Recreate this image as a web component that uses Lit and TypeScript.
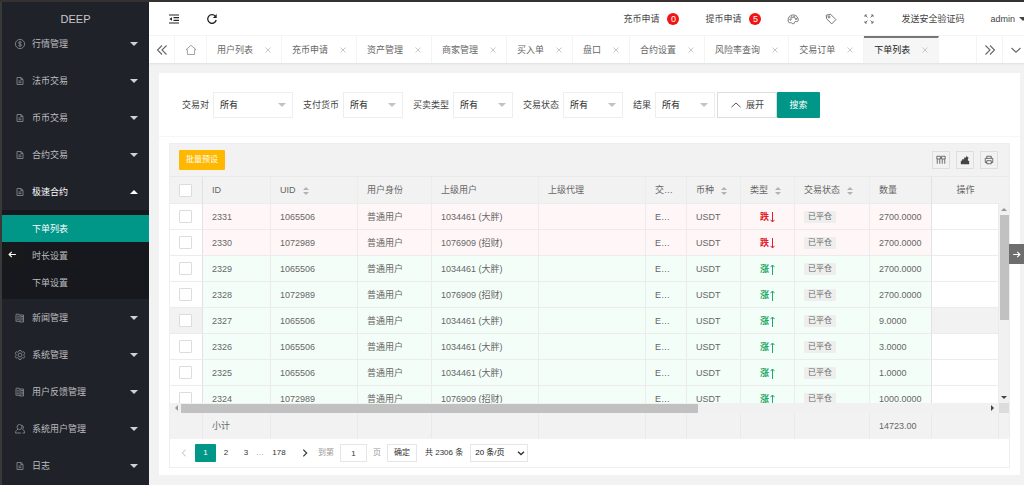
import { LitElement, html, css, svg, nothing } from "lit";
import { customElement, state } from "lit/decorators.js";
import { classMap } from "lit/directives/class-map.js";

type Row = { id: string; uid: string; parent: string; up: boolean; amount: string };

const ROWS: Row[] = [
  { id: "2331", uid: "1065506", parent: "1034461 (大胖)", up: false, amount: "2700.0000" },
  { id: "2330", uid: "1072989", parent: "1076909 (招财)", up: false, amount: "2700.0000" },
  { id: "2329", uid: "1065506", parent: "1034461 (大胖)", up: true, amount: "2700.0000" },
  { id: "2328", uid: "1072989", parent: "1076909 (招财)", up: true, amount: "2700.0000" },
  { id: "2327", uid: "1065506", parent: "1034461 (大胖)", up: true, amount: "9.0000" },
  { id: "2326", uid: "1065506", parent: "1034461 (大胖)", up: true, amount: "3.0000" },
  { id: "2325", uid: "1065506", parent: "1034461 (大胖)", up: true, amount: "1.0000" },
  { id: "2324", uid: "1072989", parent: "1076909 (招财)", up: true, amount: "1000.0000" },
];

const MENU = [
  { label: "行情管理", icon: "dollar" },
  { label: "法币交易", icon: "file" },
  { label: "币币交易", icon: "file" },
  { label: "合约交易", icon: "file" },
  { label: "极速合约", icon: "file", children: ["下单列表", "时长设置", "下单设置"] },
  { label: "新闻管理", icon: "book" },
  { label: "系统管理", icon: "gear" },
  { label: "用户反馈管理", icon: "book" },
  { label: "系统用户管理", icon: "user" },
  { label: "日志", icon: "file" },
];

const TABS = ["用户列表", "充币申请", "资产管理", "商家管理", "买入单", "盘口", "合约设置", "风险率查询", "交易订单", "下单列表"];

const FILTERS = [
  { label: "交易对", wide: true },
  { label: "支付货币" },
  { label: "买卖类型" },
  { label: "交易状态" },
  { label: "结果" },
];

const ICONS: Record<string, unknown> = {
  dollar: svg`<circle cx="6" cy="6" r="4.6"/><path d="M7.6 4.4C7 3.7 4.5 3.6 4.5 4.9 4.5 6.3 7.6 5.6 7.6 7.1 7.6 8.4 5 8.3 4.3 7.5M6 2.8v6.4"/>`,
  file: svg`<path d="M3 2.500h4l2 1.800v5.200H3zM6.900 2.600v1.900h2M4.400 6h3M4.400 7.700h3"/>`,
  book: svg`<path d="M6 3v7M6 3C5 2 3 2 2 2.4v7C3 9 5 9 6 10M6 3h3.5v7H6M7 4.5h2M7 6.2h2M7 7.9h2M3.2 4.3h1.6M3.2 6h1.6M3.2 7.6h1.6"/>`,
  gear: svg`<circle cx="6" cy="6" r="1.9"/><path d="M5 1.5h2l.4 1.2 1.1.5 1.2-.5 1 1.5-.7 1v1.4l.7 1-1 1.5-1.2-.4-1.1.5L7 10.5H5l-.4-1.3-1.1-.5-1.2.4-1-1.5.7-1V5.200l-.7-1 1-1.500 1.200.500 1.100-.500z"/>`,
  user: svg`<circle cx="5.500" cy="4" r="2.500"/><path d="M4 6.200C2.400 7 1.500 8.200 1.500 10h5.500M8 2.400c1.600.600 2 2.600.600 4C10 7 10.600 8.500 10.600 10H8.500"/>`,
  shrink: svg`<path d="M1 2h10M5.500 4.700H11M5.500 7.300H11M1 10h10" stroke-width="1.200"/><path d="M4 4.300v3.400L1.400 6z" fill="currentColor" stroke="none"/>`,
  refresh: svg`<path d="M10.200 7A4.300 4.300 0 1 1 9.300 3.200" stroke-width="1.300"/><path d="M10.700 1v4H6.900z" fill="currentColor" stroke="none"/>`,
  home: svg`<path d="M1 5.700 6 1.300l5 4.400H9.600V10.500H2.400V5.700z"/>`,
  dleft: svg`<path d="M6 1.500 1.500 6 6 10.500M10.500 1.500 6 6l4.500 4.500" stroke-width="1.100"/>`,
  dright: svg`<path d="M6 1.500 10.500 6 6 10.500M1.500 1.500 6 6l-4.500 4.500" stroke-width="1.100"/>`,
  down: svg`<path d="M1.500 4 6 8.200 10.500 4" stroke-width="1.100"/>`,
  up: svg`<path d="M1.500 8.200 6 4l4.500 4.200"/>`,
  left: svg`<path d="M8 2 4 6l4 4" stroke-width="1.200"/>`,
  right: svg`<path d="M4 2l4 4-4 4" stroke-width="1.400"/>`,
  close: svg`<path d="M3.500 3.500l5 5M8.500 3.500l-5 5"/>`,
  palette: svg`<path d="M2.500 10C.800 8.800.600 5.600 2.300 3.700 4.300 1.400 8 1.400 10 3.600c1.500 1.700 1.400 3.900.900 4.600-.800 1-2.200 0-3 .500-1 .700 0 1.800-1.200 2-.700.100-1.400-.100-1.700-.400-1-1-1.300-.700-2.500-.300z"/><circle cx="3.500" cy="6.600" r=".7"/><circle cx="4.700" cy="4.400" r=".7"/><circle cx="7.200" cy="4" r=".7"/><circle cx="9" cy="5.900" r=".7"/>`,
  tag: svg`<path d="M1.300 2.200 5.600 1.300 10.900 6.600 6.800 10.900 1.500 5.700z"/><circle cx="4" cy="3.900" r="1"/>`,
  full: svg`<path d="M2 4V2h2M2 2l2.500 2.500M8 2h2v2M10 2 7.500 4.500M2 8v2h2M2 10l2.500-2.500M10 8v2H8M10 10 7.500 7.500"/>`,
  cols: svg`<path d="M1 1.500h4.300v3.300H1zM6.700 1.500H11v3.300H6.700zM1.500 5v5.500M4.500 5v5.500M7.500 5v5.500M10.500 5v5.500"/>`,
  exportIcon: svg`<path d="M1 7h10v4H1zM2.500 5h7v2h-7zM5 3h2.500V1l3 2.600-2 2H5z" fill="currentColor" stroke="none"/>`,
  print: svg`<path d="M3.300 4V1.500h5.400V4M3.300 9H1.500V4h9v5H8.700M3.300 6.800h5.400v3.700H3.300z"/>`,
  arrowL: svg`<path d="M10.500 6h-9M5 2.500 1.500 6 5 9.500" stroke-width="1.500"/>`,
  arrowR: svg`<path d="M1.500 6h9M7 2.500 10.500 6 7 9.500" stroke-width="1.500"/>`,
};

const icon = (name: string) =>
  html`<svg class="icon" viewBox="0 0 12 12" aria-hidden="true">${ICONS[name]}</svg>`;

const shared = css`
  * { box-sizing: border-box; }
  button, input, select { font: inherit; color: inherit; margin: 0; border-radius: 0; }
  button { padding: 0; border: 0; background: none; cursor: pointer; white-space: nowrap; }
  a { color: inherit; text-decoration: none; }
  ul { list-style: none; margin: 0; padding: 0; }
  .icon { display: block; flex: none; width: 12px; height: 12px; fill: none; stroke: currentColor; stroke-width: 0.9; }
`;

@customElement("side-menu")
class SideMenu extends LitElement {
  static styles = [shared, css`
    :host { display: flex; flex-direction: column; width: 149px; flex: none; background: #20222a; border-left: 2px solid #393939; color: #bcbdbf; overflow: hidden; }
    .brand { height: 34px; flex: none; display: flex; align-items: center; justify-content: center; font-size: 11px; color: #c8c9cb; }
    .scroll { flex: 1; min-height: 0; overflow: hidden; display: flex; flex-direction: column; }
    .list { margin-top: -11px; }
    .item { width: 100%; height: 37px; display: flex; align-items: center; padding: 0 11px 0 12px; gap: 6px; text-align: left; }
    .item .icon { color: #85868a; }
    .name { flex: 1; }
    .caret { border: 4px solid transparent; border-bottom-width: 0; border-top-color: #d2d2d4; }
    .open { color: #fff; }
    .open .caret { border-bottom-width: 4px; border-top-width: 0; border-bottom-color: #fff; }
    .sub { background: #16181d; padding: 5px 0 3px; }
    .leaf { display: flex; align-items: center; height: 27px; padding-left: 30px; }
    .active { background: #009688; color: #fff; }
  `];
  render() {
    return html`
      <div class="brand">DEEP</div>
      <nav class="scroll"><ul class="list">
        ${MENU.map((m) => html`<li>
          <button class=${classMap({ item: true, open: !!m.children })} aria-expanded=${m.children ? "true" : "false"}>
            ${icon(m.icon)}<span class="name">${m.label}</span><span class="caret"></span>
          </button>
          ${m.children
            ? html`<ul class="sub">${m.children.map((c, i) => html`<li><a href="#" class=${classMap({ leaf: true, active: i === 0 })}>${c}</a></li>`)}</ul>`
            : nothing}
        </li>`)}
      </ul></nav>`;
  }
}

@customElement("top-bar")
class TopBar extends LitElement {
  static styles = [shared, css`
    :host { display: block; background: #fff; box-shadow: 0 1px 2px rgba(0, 0, 0, 0.08); }
    .bar { height: 34px; display: flex; align-items: center; justify-content: space-between; color: #444; border-bottom: 1px solid #f4f4f4; overflow: hidden; }
    .group { display: flex; align-items: center; flex: none; gap: 26px; }
    .tools { padding-left: 19px; color: #222; }
    .msg { display: flex; align-items: center; gap: 8px; }
    .badge { width: 12px; height: 12px; border-radius: 6px; background: #f01414; color: #fff; text-align: center; line-height: 12px; }
    .icon-button { color: #666; }
    .user { display: flex; align-items: center; gap: 4px; }
    .caret { border: 4px solid transparent; border-bottom-width: 0; border-top-color: #444; margin-right: -3px; }
    .tabs { height: 27px; display: flex; color: #666; margin-right: -4px; }
    .step { width: 26px; flex: none; display: flex; align-items: center; justify-content: center; border-right: 1px solid #f4f4f4; color: #666; }
    .home { width: 32px; color: #999; }
    .strip { flex: 1; min-width: 0; display: flex; overflow: hidden; }
    .tab { flex: none; display: flex; align-items: center; gap: 9px; padding: 0 7px 0 10px; border-right: 1px solid #f4f4f4; }
    .close { color: #c2c2c2; }
    .on { background: #f6f6f6; color: #222; border-top: 2px solid #777; padding-bottom: 2px; }
    .end { border-right: 0; border-left: 1px solid #f4f4f4; }
  `];
  render() {
    return html`
      <header class="bar">
        <div class="group tools">
          <button aria-label="shrink">${icon("shrink")}</button>
          <button aria-label="refresh">${icon("refresh")}</button>
        </div>
        <div class="group">
          <a class="msg" href="#">充币申请<span class="badge">0</span></a>
          <a class="msg" href="#">提币申请<span class="badge">5</span></a>
          <button class="icon-button" aria-label="theme">${icon("palette")}</button>
          <button class="icon-button" aria-label="note">${icon("tag")}</button>
          <button class="icon-button" aria-label="fullscreen">${icon("full")}</button>
          <a href="#">发送安全验证码</a>
          <button class="user">admin<span class="caret"></span></button>
        </div>
      </header>
      <div class="tabs">
        <button class="step" aria-label="previous">${icon("dleft")}</button>
        <button class="step home" aria-label="home">${icon("home")}</button>
        <div class="strip">
          ${TABS.map((t, i) => html`<a href="#" class=${classMap({ tab: true, on: i === TABS.length - 1 })}>${t}<span class="close">${icon("close")}</span></a>`)}
        </div>
        <button class="step end" aria-label="next">${icon("dright")}</button>
        <button class="step end" aria-label="more">${icon("down")}</button>
      </div>`;
  }
}

@customElement("filter-form")
class FilterForm extends LitElement {
  static styles = [shared, css`
    :host { display: block; padding: 19px 23px 18px; border-bottom: 1px solid #f6f6f6; }
    .form { display: flex; flex-wrap: wrap; align-items: center; row-gap: 8px; color: #444; }
    .field { display: flex; align-items: center; gap: 4px; margin-right: 10px; }
    .field:last-of-type { margin-right: 2px; }
    .pick { position: relative; width: 60px; }
    .wide { width: 80px; }
    .select { appearance: none; display: block; width: 100%; height: 26px; border: 1px solid #eee; background: #fff; padding: 0 6px; color: #222; }
    .mark { position: absolute; right: 7px; top: 11px; border: 4px solid transparent; border-bottom-width: 0; border-top-color: #c2c2c2; pointer-events: none; }
    .button { height: 26px; display: flex; align-items: center; justify-content: center; gap: 4px; }
    .toggle { width: 60px; border: 1px solid #ddd; background: #fff; }
    .search { width: 43px; background: #009688; color: #fff; border-radius: 1px; }
  `];
  render() {
    return html`<form class="form" @submit=${(e: Event) => e.preventDefault()}>
      ${FILTERS.map((f, i) => html`<div class="field">
        <label for="f${i}">${f.label}</label>
        <div class=${classMap({ pick: true, wide: !!f.wide })}><select class="select" id="f${i}"><option>所有</option></select><span class="mark"></span></div>
      </div>`)}
      <button class="button toggle" type="button">${icon("up")}展开</button>
      <button class="button search">搜索</button>
    </form>`;
  }
}

@customElement("order-table")
class OrderTable extends LitElement {
  @state() private hovered = "2327";
  static styles = [shared, css`
    :host { display: block; border: 1px solid #eee; color: #666; }
    .toolbar { height: 33px; padding: 0 11px 0 9px; background: #f2f2f2; border-bottom: 1px solid #e9e9e9; display: flex; align-items: center; justify-content: space-between; }
    .preset { width: 46px; height: 20px; background: #ffb800; color: #fff; border-radius: 1px; font-size: 8px; }
    .actions { display: flex; gap: 6px; }
    .action { width: 18px; height: 18px; border: 1px solid #ddd; display: flex; align-items: center; justify-content: center; color: #444; }
    .action .icon { width: 10px; height: 10px; }
    table { flex: 1; min-width: 0; width: 100%; table-layout: fixed; border-collapse: separate; border-spacing: 0; }
    .band { display: flex; background: #f2f2f2; }
    .gutter { width: 10px; flex: none; }
    .c-check { width: 33px; } .c-id { width: 68px; } .c-uid { width: 87px; } .c-role { width: 74px; }
    .c-parent { width: 107px; } .c-pair { width: 41px; } .c-coin { width: 54px; } .c-type { width: 54px; }
    .c-state { width: 75px; } .c-amount { width: 62px; } .c-op { width: 67px; }
    th, td { height: 26px; padding: 0 0 0 9px; border-right: 1px solid #ececec; border-bottom: 1px solid #ececec; font-weight: normal; text-align: left; white-space: nowrap; overflow: hidden; text-overflow: ellipsis; line-height: 16px; }
    th { height: 27px; }
    .center { text-align: center; padding: 0; }
    th.center:last-child { border-right: 0; }
    .fix-left, .before-op { border-right-color: #e2e2e2; }
    .sort { display: inline-flex; flex-direction: column; gap: 2px; margin-left: 7px; vertical-align: middle; }
    .asc, .desc { border: 3px solid transparent; }
    .asc { border-top: 0; border-bottom-color: #b2b2b2; }
    .desc { border-bottom: 0; border-top-color: #b2b2b2; }
    .box { appearance: none; display: block; width: 13px; height: 13px; border: 1px solid #dcdcdc; background: #fff; border-radius: 1px; }
    .viewport { display: flex; height: 199px; }
    .clip { flex: 1; min-width: 0; height: 100%; overflow: hidden; }
    .down td { background: #fff7f7; }
    .up td { background: #f4fef8; }
    .down .fixed, .up .fixed { background: #fff; }
    .hover .fixed { background: #f2f2f2; }
    .kind { display: inline-flex; align-items: center; gap: 1px; font-weight: bold; padding-top: 2px; line-height: 14px; color: #e0202c; }
    .up .kind { color: #1fa868; }
    .arrow { width: 5px; height: 11px; fill: none; stroke: currentColor; }
    .flip { transform: rotate(180deg); }
    .tag { display: inline-block; vertical-align: middle; height: 12px; line-height: 12px; padding: 0 4px; background: #eee; font-size: 8px; border-radius: 1px; }
    .vbar { width: 10px; flex: none; background: #f1f1f1; display: flex; flex-direction: column; align-items: center; padding: 4px 0; gap: 4px; }
    .vthumb { width: 9px; height: 105px; background: #c1c1c1; }
    .tri { border: 3px solid transparent; flex: none; }
    .t-up { border-top: 0; border-bottom-color: #999; }
    .t-down { border-bottom: 0; border-top-color: #444; margin-top: auto; }
    .t-left { border-left: 0; border-right-color: #999; }
    .t-right { border-right: 0; border-left-color: #444; margin-left: auto; margin-right: 2px; }
    .hbar { display: flex; align-items: center; height: 10px; background: #f1f1f1; padding-left: 5px; gap: 3px; }
    .hthumb { width: 62%; height: 9px; background: #c1c1c1; }
    .corner { width: 10px; height: 10px; background: #dcdcdc; }
    .total td { border-bottom-color: #f2f2f2; border-right-color: #e9e9e9; }
    .pager { display: flex; align-items: center; height: 28px; padding: 0 8px; font-size: 8px; color: #333; }
    .turn { width: 11px; display: flex; justify-content: center; color: #bbb; }
    .turn .icon { width: 10px; height: 10px; }
    .next { color: #333; width: 12px; margin: 0 7px 0 5px; }
    .page { min-width: 20px; height: 18px; display: flex; align-items: center; justify-content: center; }
    .current { width: 21px; margin-left: 6px; background: #009688; color: #fff; border-radius: 1px; }
    .dots { width: 8px; color: #888; }
    .last { min-width: 30px; }
    .jump { display: flex; align-items: center; gap: 6px; color: #999; }
    .number { width: 27px; height: 18px; border: 1px solid #e6e6e6; text-align: center; padding: 0; color: #333; }
    .go { width: 30px; height: 18px; border: 1px solid #e6e6e6; margin: 0 8px 0 6px; background: #fff; }
    .size { position: relative; margin-left: 7px; width: 58px; }
    .limit { appearance: none; display: block; width: 100%; height: 18px; border: 1px solid #e6e6e6; background: #fff; padding: 0 4px; color: #111; }
    .chevron { position: absolute; right: 3px; top: 5px; pointer-events: none; }
    .chevron .icon { width: 8px; height: 8px; }
    .chevron path { stroke-width: 2; }
  `];

  private cols() {
    return html`<colgroup><col class="c-check"><col class="c-id"><col class="c-uid"><col class="c-role"><col class="c-parent"><col><col class="c-pair"><col class="c-coin"><col class="c-type"><col class="c-state"><col class="c-amount"><col class="c-op"></colgroup>`;
  }
  private sort() {
    return html`<span class="sort"><span class="asc"></span><span class="desc"></span></span>`;
  }
  private row(r: Row) {
    return html`<tr class=${classMap({ up: r.up, down: !r.up, hover: this.hovered === r.id })} @mouseenter=${() => (this.hovered = r.id)}>
      <td class="fixed fix-left"><input class="box" type="checkbox" aria-label=${r.id}></td>
      <td>${r.id}</td><td>${r.uid}</td><td>普通用户</td><td>${r.parent}</td><td></td>
      <td>E…</td><td>USDT</td>
      <td class="center"><span class="kind">${r.up ? "涨" : "跌"}<svg class=${classMap({ arrow: true, flip: r.up })} viewBox="0 0 5 11"><path d="M2.500 0v10M.500 7.800l2 2.200 2-2.200"/></svg></span></td>
      <td><span class="tag">已平仓</span></td><td class="before-op">${r.amount}</td><td class="fixed"></td>
    </tr>`;
  }
  render() {
    return html`
      <div class="toolbar">
        <button class="preset">批量预设</button>
        <div class="actions">
          <button class="action" aria-label="columns">${icon("cols")}</button>
          <button class="action" aria-label="export">${icon("exportIcon")}</button>
          <button class="action" aria-label="print">${icon("print")}</button>
        </div>
      </div>
      <div class="band">
        <table>${this.cols()}<thead><tr>
          <th class="fix-left"><input class="box" type="checkbox" aria-label="all"></th>
          <th>ID</th><th>UID${this.sort()}</th><th>用户身份</th><th>上级用户</th><th>上级代理</th><th>交…</th>
          <th>币种${this.sort()}</th><th>类型${this.sort()}</th><th>交易状态${this.sort()}</th><th class="before-op">数量</th><th class="center">操作</th>
        </tr></thead></table>
        <div class="gutter"></div>
      </div>
      <div class="viewport">
        <div class="clip"><table>${this.cols()}<tbody>${ROWS.map((r) => this.row(r))}</tbody></table></div>
        <div class="vbar"><span class="tri t-up"></span><span class="vthumb"></span><span class="tri t-down"></span></div>
      </div>
      <div class="hbar"><span class="tri t-left"></span><span class="hthumb"></span><span class="tri t-right"></span><span class="corner"></span></div>
      <div class="band">
        <table>${this.cols()}<tbody><tr class="total">
          <td></td><td>小计</td><td></td><td></td><td></td><td></td><td></td><td></td><td></td><td></td><td>14723.00</td><td></td>
        </tr></tbody></table>
        <div class="gutter"></div>
      </div>
      <div class="pager">
        <button class="turn" aria-label="previous page">${icon("left")}</button>
        <a class="page current" href="#">1</a><a class="page" href="#">2</a><a class="page" href="#">3</a><span class="dots">…</span><a class="page last" href="#">178</a>
        <button class="turn next" aria-label="next page">${icon("right")}</button>
        <label class="jump">到第<input class="number" type="text" value="1">页</label>
        <button class="go">确定</button>
        <span>共 2306 条</span>
        <div class="size"><select class="limit" aria-label="rows per page"><option>20 条/页</option></select><span class="chevron">${icon("down")}</span></div>
      </div>`;
  }
}

@customElement("app-root")
class AppRoot extends LitElement {
  static styles = [shared, css`
    :host { display: flex; position: relative; height: 100vh; overflow: hidden; border-top: 2px solid #353131; box-sizing: border-box; background: #f2f2f2; font-family: "Liberation Sans", "Noto Sans CJK SC", sans-serif; font-size: 9px; line-height: 14px; }
    .main { flex: 1; min-width: 0; display: flex; flex-direction: column; }
    .page { flex: 1; min-height: 0; overflow: hidden; padding: 10px 4px 10px 10px; }
    .card { background: #fff; }
    .grid { padding: 6px 10px 7px; }
    .drawer { position: absolute; top: 242px; height: 20px; display: flex; align-items: center; justify-content: center; color: #fff; }
    .drawer .icon { width: 9px; height: 9px; }
    .left { left: 2px; width: 21px; background: #17191a; }
    .right { right: 0; width: 15px; background: #6e6e6e; }
  `];
  render() {
    return html`
      <side-menu></side-menu>
      <div class="main">
        <top-bar></top-bar>
        <main class="page"><section class="card">
          <filter-form></filter-form>
          <div class="grid"><order-table></order-table></div>
        </section></main>
      </div>
      <button class="drawer left" aria-label="collapse">${icon("arrowL")}</button>
      <button class="drawer right" aria-label="expand">${icon("arrowR")}</button>`;
  }
}
